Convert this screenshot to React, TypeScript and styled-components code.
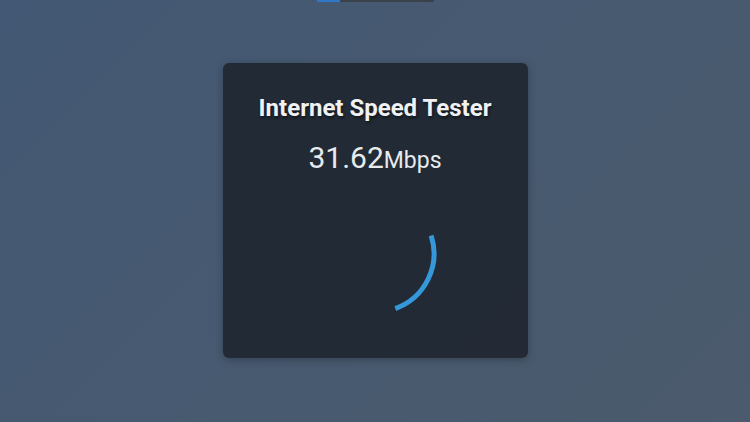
import React from 'react'
import styled, { createGlobalStyle } from 'styled-components'

const GlobalStyle = createGlobalStyle`
  html, body {
    margin: 0;
    padding: 0;
  }
  body {
    font-family: Roboto, "Liberation Sans", sans-serif;
    background: linear-gradient(135deg, #435874 0%, #485a70 55%, #4b5a6c 100%);
    min-height: 100vh;
  }
`

const Page = styled.div`
  display: flex;
  flex-direction: column;
  align-items: center;
  min-height: 100vh;
`

const TopBar = styled.div`
  width: 117px;
  height: 2px;
  background: #3a414b;
  display: flex;
`

const TopBarFill = styled.div<{ $pct: number }>`
  width: ${(p) => p.$pct}%;
  background: #2d78c8;
`

const Card = styled.div`
  margin-top: 61px;
  width: 305px;
  height: 295px;
  box-sizing: border-box;
  padding-top: 31px;
  background: linear-gradient(135deg, #212a35 0%, #232a35 100%);
  border-radius: 6px;
  box-shadow: 0 2px 8px rgba(0, 0, 0, 0.25);
  display: flex;
  flex-direction: column;
  align-items: center;
  color: #eff1f3;
`

const Title = styled.h1`
  margin: 0;
  font-size: 24px;
  line-height: 28px;
  font-weight: 700;
  text-shadow: 1px 2px 3px rgba(0, 0, 0, 0.5);
`

const Speed = styled.div`
  margin-top: 20px;
  line-height: 32px;
  font-size: 30px;
  font-weight: 400;
  color: #e8ebee;
`

const Unit = styled.span`
  font-size: 23px;
`

const SpinnerBox = styled.svg`
  margin-top: 14px;
  width: 125px;
  height: 125px;
  display: block;
`

export default function App() {
  const r = 58.5
  const circ = 2 * Math.PI * r
  const arc = (88 / 360) * circ

  return (
    <>
      <GlobalStyle />
      <Page>
        <TopBar>
          <TopBarFill $pct={20} />
        </TopBar>
        <Card>
          <Title>Internet Speed Tester</Title>
          <Speed>
            31.62<Unit>Mbps</Unit>
          </Speed>
          <SpinnerBox viewBox="0 0 125 125">
            <circle
              cx="62.5"
              cy="62.5"
              r={r}
              fill="none"
              stroke="#3498db"
              strokeWidth="5"
              strokeDasharray={`${arc} ${circ}`}
              transform="rotate(-18 62.5 62.5)"
            />
          </SpinnerBox>
        </Card>
      </Page>
    </>
  )
}
